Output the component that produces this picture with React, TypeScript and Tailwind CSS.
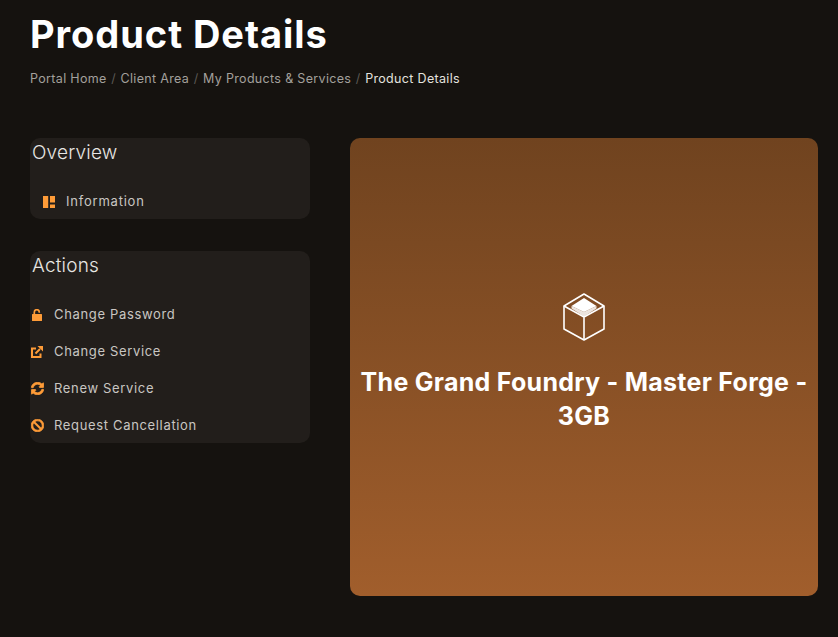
import { FaSyncAlt, FaBan } from "react-icons/fa";

function LockIcon() {
  return (
    <svg viewBox="0 0 10 12" className="h-3 w-[10px]" fill="#ff9c38">
      <rect x="0" y="5" width="10" height="7" rx="0.5" />
      <path d="M2.3 5.5 V3.2 a2.5 2.5 0 0 1 5 0 V3.8" fill="none" stroke="#ff9c38" strokeWidth="1.7" />
    </svg>
  );
}

function ExternalIcon() {
  return (
    <svg viewBox="0 0 12 12" className="h-3 w-3" fill="#ff9c38">
      <path d="M5 2.5 H1 V11 H9.5 V7.5" fill="none" stroke="#ff9c38" strokeWidth="2" />
      <path d="M4.5 7.5 L9 3" fill="none" stroke="#ff9c38" strokeWidth="2" />
      <path d="M6.5 0 H12 V5.5 Z" />
    </svg>
  );
}

function SyncIcon() {
  return <FaSyncAlt className="text-[13px]" stroke="currentColor" strokeWidth={30} />;
}

function BanIcon() {
  return <FaBan className="text-[13px]" stroke="currentColor" strokeWidth={30} />;
}

const actions = [
  { label: "Change Password", Icon: LockIcon },
  { label: "Change Service", Icon: ExternalIcon },
  { label: "Renew Service", Icon: SyncIcon },
  { label: "Request Cancellation", Icon: BanIcon },
];

function Crumb({ children, last }: { children: string; last?: boolean }) {
  return (
    <>
      <span className={last ? "text-[#e4e2df]" : "text-[#a3a09c]"}>{children}</span>
      {!last && <span className="px-[4.5px] text-[#5c5955]">/</span>}
    </>
  );
}

export default function App() {
  return (
    <div className="min-h-[637px] w-[838px] overflow-hidden bg-[#15120f] pl-[30px] pr-5 font-['Inter','Liberation_Sans',sans-serif]">
      <h1 className="pt-[10px] text-[38px] leading-[48px] font-bold tracking-[0.95px] text-white">Product Details</h1>
      <nav className="mt-[13px] flex h-[16px] items-center text-[12.5px] leading-4 tracking-[0.33px]">
        <Crumb>Portal Home</Crumb>
        <Crumb>Client Area</Crumb>
        <Crumb>My Products &amp; Services</Crumb>
        <Crumb last>Product Details</Crumb>
      </nav>
      <div className="mt-[51px] flex gap-10">
        <aside className="flex w-[280px] shrink-0 flex-col gap-8">
          <section className="h-[81px] rounded-[10px] bg-[#221e1b] pl-[2px] pt-[3px]">
            <h3 className="text-[19px] leading-6 font-light tracking-[0.2px] text-[#e8e6e3]">Overview</h3>
            <div className="mt-[27px] flex h-5 items-center pl-[11px] text-[13px] tracking-[0.78px] text-[#c9c6c2]">
              <svg viewBox="0 0 12 12" className="h-3 w-3 shrink-0" fill="#ff9c38">
                <rect x="0" y="0" width="5.2" height="12" />
                <rect x="7" y="0" width="5" height="6.5" />
                <rect x="7" y="8.5" width="5" height="3.5" />
              </svg>
              <span className="ml-[11px]">Information</span>
            </div>
          </section>
          <section className="h-[192px] rounded-[10px] bg-[#221e1b] pt-[3px]">
            <h3 className="pl-[2px] text-[19px] leading-6 font-light tracking-[0.2px] text-[#e8e6e3]">Actions</h3>
            <ul className="mt-[18px] flex flex-col">
              {actions.map(({ label, Icon }) => (
                <li key={label} className="flex h-[37px] items-center text-[13px] tracking-[0.66px] text-[#c9c6c2]">
                  <span className="flex w-[14px] justify-center text-[#ff9c38]">
                    <Icon />
                  </span>
                  <span className="ml-[10px]">{label}</span>
                </li>
              ))}
            </ul>
          </section>
        </aside>
        <main className="flex h-[458px] w-[468px] flex-col items-center rounded-[10px] bg-gradient-to-b from-[#70431f] to-[#a15e2c] pt-[155px]">
          <svg viewBox="0 0 42 48" className="h-[48px] w-[42px]" fill="none" stroke="#fff" strokeWidth="1.6" strokeLinejoin="round">
            <path d="M21 1 L41 13 L41 36 L21 47 L1 36 L1 13 Z" />
            <path d="M1 13 L21 24 L41 13 M21 24 L21 47" />
            <path d="M21 5 L33.5 13 L21 19 L8.5 13 Z" fill="#fff" stroke="none" />
            <path d="M8.5 13 L21 19 L33.5 13 L33.5 15.5 L21 23.5 L8.5 15.5 Z" fill="#fff" fillOpacity="0.85" stroke="none" />
          </svg>
          <h2 className="mt-[24px] px-2 text-center text-[25px] leading-[34px] font-bold tracking-[0.27px] text-white">
            The Grand Foundry - Master Forge - 3GB
          </h2>
        </main>
      </div>
    </div>
  );
}
